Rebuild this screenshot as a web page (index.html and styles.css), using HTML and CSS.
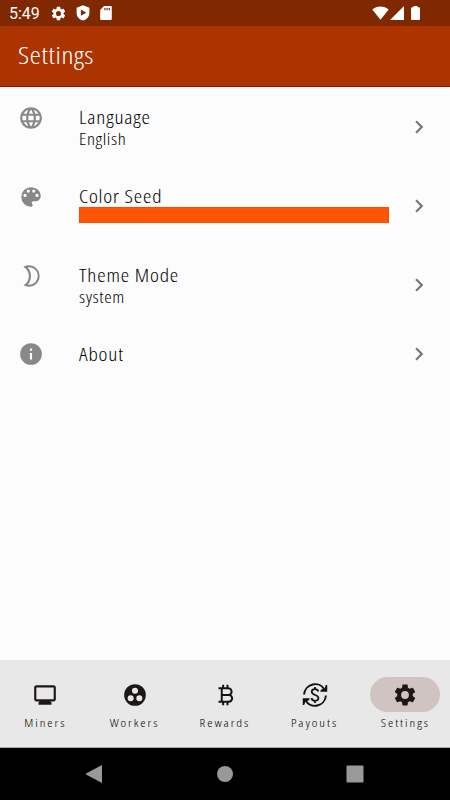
FILE: index.html
```html
<!DOCTYPE html>
<html lang="en">
<head>
<meta charset="UTF-8">
<meta name="viewport" content="width=device-width, initial-scale=1.0">
<title>Settings</title>
<link rel="stylesheet" href="styles.css">
</head>
<body>
<div class="status-bar">
    <span class="time">5:49</span>
    <div class="notifications">
        <svg class="gear" viewBox="0 0 24 24"><path d="M19.14 12.94c.04-.3.06-.61.06-.94 0-.32-.02-.64-.07-.94l2.03-1.58c.18-.14.23-.41.12-.61l-1.92-3.32c-.12-.22-.37-.29-.59-.22l-2.39.96c-.5-.38-1.03-.7-1.62-.94l-.36-2.54c-.04-.24-.24-.41-.48-.41h-3.84c-.24 0-.43.17-.47.41l-.36 2.54c-.59.24-1.13.57-1.62.94l-2.39-.96c-.22-.08-.47 0-.59.22L2.74 8.87c-.12.21-.08.47.12.61l2.03 1.58c-.05.3-.09.63-.09.94s.02.64.07.94l-2.03 1.58c-.18.14-.23.41-.12.61l1.92 3.32c.12.22.37.29.59.22l2.39-.96c.5.38 1.03.7 1.62.94l.36 2.54c.05.24.24.41.48.41h3.84c.24 0 .44-.17.47-.41l.36-2.54c.59-.24 1.13-.56 1.62-.94l2.39.96c.22.08.47 0 .59-.22l1.92-3.32c.12-.22.07-.47-.12-.61zM12 15.6a3.6 3.6 0 1 1 0-7.2 3.6 3.6 0 0 1 0 7.2z"/></svg>
        <svg class="shield" viewBox="0 0 14 16"><path fill-rule="evenodd" d="M7 .3 13.4 2.7v5C13.4 11.6 10.8 14.4 7 15.6 3.2 14.4.6 11.6.6 7.7v-5zM4.900 4.600v6.200L10.300 7.700z"/></svg>
        <svg class="sd-card" viewBox="0 0 12 14"><path fill-rule="evenodd" d="M4 0h6.800q1 0 1 1v12q0 1-1 1H1.200q-1 0-1-1V4zM4.300 2v2.300h1.200V2zm2.200 0v2.300h1.200V2zm2.200 0v2.300h1.200V2z"/></svg>
    </div>
    <div class="signals">
        <svg class="wifi" viewBox="0 0 17 14"><path d="M8.500 13.800.3 3.600C4.800-.5 12.200-.5 16.700 3.600z"/></svg>
        <svg class="cell" viewBox="0 0 14 14"><path d="M14 0v14H0z"/></svg>
        <svg class="battery" viewBox="0 0 9 14"><path d="M2.500 0h4v1.300H8q1 0 1 1V13q0 1-1 1H1q-1 0-1-1V2.300q0-1 1-1h1.500z"/></svg>
    </div>
</div>

<header class="app-bar">
    <h1>Settings</h1>
</header>

<main class="settings">
    <div class="tile">
        <svg class="lead" viewBox="0 0 24 24"><path d="M11.990 2C6.470 2 2 6.480 2 12s4.470 10 9.990 10C17.520 22 22 17.520 22 12S17.520 2 11.990 2zm6.930 6h-2.950a15.650 15.650 0 0 0-1.380-3.560A8.030 8.030 0 0 1 18.920 8zM12 4.040c.83 1.200 1.480 2.530 1.910 3.960h-3.820c.43-1.430 1.080-2.760 1.910-3.960zM4.260 14C4.100 13.360 4 12.690 4 12s.1-1.360.26-2h3.380c-.08.66-.14 1.320-.14 2s.06 1.340.14 2H4.260zm.82 2h2.950c.32 1.250.78 2.450 1.380 3.560A7.990 7.990 0 0 1 5.080 16zm2.950-8H5.080a7.990 7.990 0 0 1 4.330-3.560A15.650 15.650 0 0 0 8.030 8zM12 19.960c-.83-1.200-1.480-2.530-1.910-3.960h3.820c-.43 1.430-1.080 2.760-1.910 3.960zM14.340 14H9.660c-.09-.66-.16-1.320-.16-2s.07-1.350.16-2h4.680c.09.65.16 1.320.16 2s-.07 1.340-.16 2zm.25 5.560c.6-1.110 1.060-2.310 1.380-3.560h2.950a8.030 8.030 0 0 1-4.330 3.560zM16.360 14c.08-.66.14-1.320.14-2s-.06-1.340-.14-2h3.380c.16.64.26 1.310.26 2s-.1 1.360-.26 2h-3.380z"/></svg>
        <div class="body">
            <div class="title">Language</div>
            <div class="subtitle">English</div>
        </div>
        <svg class="chevron" viewBox="0 0 24 24"><path d="M10 6 8.590 7.410 13.170 12l-4.580 4.590L10 18l6-6z"/></svg>
    </div>
    <div class="tile">
        <svg class="lead" viewBox="0 0 24 24"><path d="M12 3a9 9 0 0 0 0 18c.83 0 1.500-.67 1.500-1.500 0-.39-.15-.74-.39-1.010-.23-.26-.38-.61-.38-.99 0-.83.67-1.500 1.500-1.500H16c2.760 0 5-2.240 5-5 0-4.420-4.030-8-9-8zm-5.500 9a1.500 1.500 0 1 1 0-3 1.500 1.500 0 0 1 0 3zm3-4a1.500 1.500 0 1 1 0-3 1.500 1.500 0 0 1 0 3zm5 0a1.500 1.500 0 1 1 0-3 1.500 1.500 0 0 1 0 3zm3 4a1.500 1.500 0 1 1 0-3 1.500 1.500 0 0 1 0 3z"/></svg>
        <div class="body">
            <div class="title">Color Seed</div>
            <div class="swatch"></div>
        </div>
        <svg class="chevron" viewBox="0 0 24 24"><path d="M10 6 8.590 7.410 13.170 12l-4.580 4.590L10 18l6-6z"/></svg>
    </div>
    <div class="tile">
        <svg class="lead" viewBox="0 0 24 24"><path fill-rule="evenodd" d="M10 2c-1.820 0-3.530.5-5 1.350C7.990 5.080 10 8.300 10 12s-2.010 6.920-5 8.650C6.470 21.500 8.180 22 10 22c5.520 0 10-4.480 10-10S15.520 2 10 2zM9.100 4.040C14.100 3.500 18.200 7.300 18.200 12S14.100 20.500 9.100 19.960C10.900 17.800 12 15 12 12s-1.100-5.800-2.900-7.960z"/></svg>
        <div class="body">
            <div class="title">Theme Mode</div>
            <div class="subtitle">system</div>
        </div>
        <svg class="chevron" viewBox="0 0 24 24"><path d="M10 6 8.590 7.410 13.170 12l-4.580 4.590L10 18l6-6z"/></svg>
    </div>
    <div class="tile single">
        <svg class="lead" viewBox="0 0 24 24"><path d="M12 2a10 10 0 1 0 0 20 10 10 0 0 0 0-20zm1 15h-2v-6h2v6zm0-8h-2V7h2v2z"/></svg>
        <div class="body">
            <div class="title">About</div>
        </div>
        <svg class="chevron" viewBox="0 0 24 24"><path d="M10 6 8.590 7.410 13.170 12l-4.580 4.590L10 18l6-6z"/></svg>
    </div>
</main>

<nav class="bottom-nav">
    <div class="nav-item">
        <div class="pill"><svg viewBox="0 0 24 24"><path d="M20 3H4c-1.100 0-2 .9-2 2v11c0 1.100.9 2 2 2h3l-1 1v2h12v-2l-1-1h3c1.100 0 2-.9 2-2V5c0-1.100-.9-2-2-2zm0 13H4V5h16v11z"/></svg></div>
        <span>Miners</span>
    </div>
    <div class="nav-item">
        <div class="pill"><svg viewBox="0 0 24 24"><path d="M12 2a10 10 0 1 0 0 20 10 10 0 0 0 0-20zM8 17.800a2.800 2.800 0 1 1 0-5.600 2.800 2.800 0 0 1 0 5.600zM9.200 8a2.800 2.800 0 1 1 5.600 0 2.800 2.800 0 0 1-5.600 0zm6.800 9.800a2.800 2.800 0 1 1 0-5.600 2.800 2.800 0 0 1 0 5.600z"/></svg></div>
        <span>Workers</span>
    </div>
    <div class="nav-item">
        <div class="pill"><svg class="line" viewBox="0 0 24 24"><path d="M6 5.800h9a3.100 3.100 0 0 1 0 6.200H9h6.500a3.100 3.100 0 0 1 0 6.200H6M9 5.800v12.400M10.300 2.500v3m4-3v3m-4 13v3m4-3v3"/></svg></div>
        <span>Rewards</span>
    </div>
    <div class="nav-item">
        <div class="pill"><svg class="line" viewBox="0 0 24 24"><path d="M1.900 11.500A10.200 10.200 0 0 1 21 7.300M22.100 12.500A10.200 10.200 0 0 1 3 16.700"/><path class="solid" d="M23.300 2.800v6.100h-6.300V8l1.500-1.500 2 .3L22 2.800zM.7 21.200v-6.100h6.300V16l-1.500 1.500-2-.3L2 21.200z"/><path class="dollar" d="M15 8.800C14.700 7.300 13.600 6.600 12 6.600S9 7.500 9 9c0 3.700 6.200 2.200 6.200 5.800 0 1.600-1.400 2.500-3.200 2.500s-3-.9-3.300-2.500M12 4.500v2.100m0 10.700v2.100"/></svg></div>
        <span>Payouts</span>
    </div>
    <div class="nav-item active">
        <div class="pill"><svg viewBox="0 0 24 24"><path d="M19.140 12.940c.04-.3.06-.61.06-.94 0-.32-.02-.64-.07-.94l2.030-1.580c.18-.14.23-.41.12-.61l-1.920-3.320c-.12-.22-.37-.29-.59-.22l-2.390.96c-.5-.38-1.030-.7-1.620-.94l-.36-2.540c-.04-.24-.24-.41-.48-.41h-3.840c-.24 0-.43.17-.47.41l-.36 2.540c-.59.24-1.130.57-1.620.94l-2.390-.96c-.22-.08-.47 0-.59.22L2.740 8.870c-.12.21-.08.47.12.61l2.030 1.580c-.05.3-.09.63-.09.94s.02.64.07.94l-2.030 1.580c-.18.14-.23.41-.12.61l1.920 3.320c.12.22.37.29.59.22l2.390-.96c.5.38 1.030.7 1.620.94l.36 2.540c.05.24.24.41.48.41h3.840c.24 0 .44-.17.47-.41l.36-2.540c.59-.24 1.130-.56 1.620-.94l2.390.96c.22.08.47 0 .59-.22l1.920-3.320c.12-.22.07-.47-.12-.61zM12 15.600a3.600 3.600 0 1 1 0-7.200 3.600 3.600 0 0 1 0 7.200z"/></svg></div>
        <span>Settings</span>
    </div>
</nav>

<div class="system-nav">
    <svg viewBox="0 0 18 18"><path d="M17 0v18L1 9.500v-1z"/></svg>
    <svg viewBox="0 0 18 18"><circle cx="9" cy="9" r="8"/></svg>
    <svg viewBox="0 0 18 18"><rect x=".5" y=".5" width="17" height="17" rx="1"/></svg>
</div>
</body>
</html>
```

FILE: styles.css
```css
* {
    box-sizing: border-box;
}
body {
    margin: 0;
    height: 800px;
    display: flex;
    flex-direction: column;
    background-color: #fcfcfc;
    color: #111;
    font-family: "Open Sans", "Noto Sans", sans-serif;
    font-stretch: 75%;
    overflow: hidden;
}
svg {
    display: block;
    flex-shrink: 0;
    fill: currentColor;
}
.status-bar {
    height: 26px;
    padding: 0 30px 0 9px;
    display: flex;
    align-items: center;
    background-color: #802800;
    color: #fff;
}
.time {
    width: 41px;
    padding-top: 2px;
    font: 16px/24px Roboto, sans-serif;
}
.notifications {
    display: flex;
    align-items: center;
    gap: 9px;
}
.gear {
    width: 17px;
    height: 17px;
}
.shield {
    width: 14px;
    height: 16px;
}
.sd-card {
    width: 12px;
    height: 14px;
    margin-left: 1px;
}
.signals {
    margin-left: auto;
    display: flex;
    gap: 1px;
}
.wifi {
    width: 17px;
    height: 14px;
}
.cell {
    width: 14px;
    height: 14px;
}
.battery {
    width: 9px;
    height: 14px;
    margin-left: 6px;
}
.app-bar {
    height: 61px;
    padding: 0 18px 3px;
    display: flex;
    align-items: center;
    background-color: #ac3400;
    border-bottom: 1px solid #ac0800;
    color: #fff;
}
/* the condensed face is a bit too narrow, so the text is widened */
.app-bar h1 {
    margin: 0;
    font-size: 23px;
    font-weight: 350;
    letter-spacing: 0.5px;
    transform: scaleX(1.22);
    transform-origin: left;
}
.settings {
    flex: 1;
}
.tile {
    height: 78.8px;
    padding: 18px 17px 0 18px;
    display: flex;
}
.lead {
    width: 26px;
    height: 26px;
    color: #888;
}
.body {
    width: 310px;
    margin-left: 35px;
}
.title,
.subtitle {
    width: 240px;
    font-weight: 350;
    color: #000;
    transform: scaleX(1.18);
    transform-origin: left;
}
.title {
    height: 23px;
    font-size: 18px;
    line-height: 25px;
    letter-spacing: 0.7px;
}
.subtitle {
    font-size: 16px;
    line-height: 22px;
    letter-spacing: 0.5px;
}
.swatch {
    height: 16px;
    background-color: #ff5500;
    box-shadow: inset 0 0 0 1px #ff4800;
}
.chevron {
    width: 26px;
    height: 26px;
    margin: 9px 0 0 17px;
    color: #777;
}
.single .title {
    line-height: 27px;
}
.single .chevron {
    margin-top: 0;
}
.bottom-nav {
    height: 88px;
    display: flex;
    background-color: #e8e8e8;
    border-bottom: 1px solid #aaa;
}
.nav-item {
    flex: 1;
    padding-top: 17px;
    display: flex;
    flex-direction: column;
    align-items: center;
    font-size: 11px;
    line-height: 20px;
    letter-spacing: 1.6px;
}
.nav-item span {
    font-weight: 350;
    color: #000;
    transform: scaleX(1.21);
}
.pill {
    width: 70px;
    height: 35px;
    margin-bottom: 1px;
    display: flex;
    align-items: center;
    justify-content: center;
    border-radius: 18px;
    color: #1d1816;
}
.pill svg {
    width: 26px;
    height: 26px;
}
.active .pill {
    background-color: #cfc4c1;
}
.pill .line {
    fill: none;
    stroke: #111;
    stroke-width: 1.8;
}
.pill .solid {
    fill: #111;
    stroke: none;
}
.dollar {
    stroke-width: 1.6;
}
.system-nav {
    height: 52px;
    padding: 0 86px 0 85px;
    display: flex;
    align-items: center;
    justify-content: space-between;
    background-color: #000;
    color: #999;
}
.system-nav svg {
    width: 18px;
    height: 18px;
}
```
